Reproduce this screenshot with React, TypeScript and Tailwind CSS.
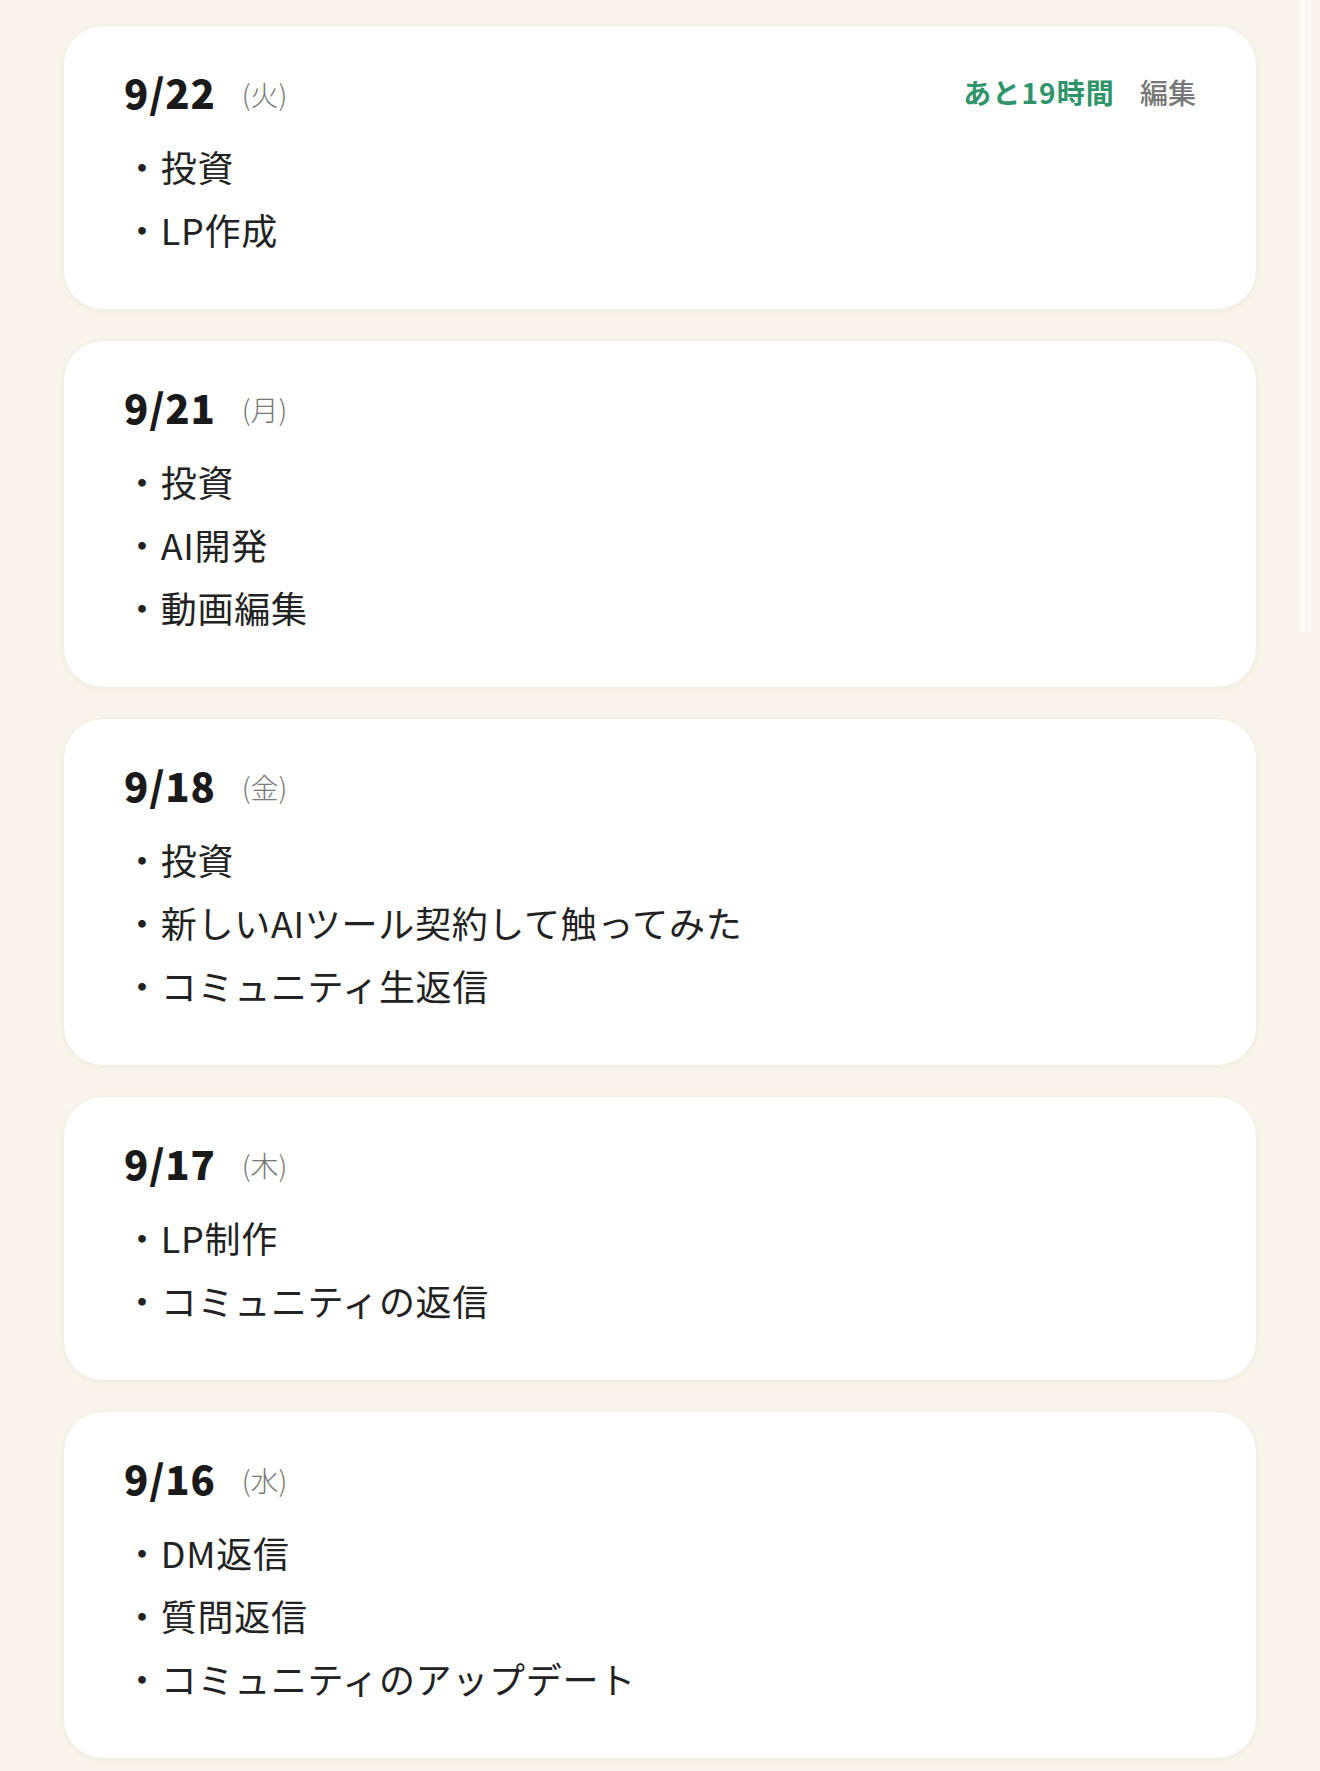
import React from "react"

type Entry = {
  date: string
  day: string
  items: string[]
  remaining?: string
}

const entries: Entry[] = [
  { date: "9/22", day: "火", items: ["投資", "LP作成"], remaining: "あと19時間" },
  { date: "9/21", day: "月", items: ["投資", "AI開発", "動画編集"] },
  { date: "9/18", day: "金", items: ["投資", "新しいAIツール契約して触ってみた", "コミュニティ生返信"] },
  { date: "9/17", day: "木", items: ["LP制作", "コミュニティの返信"] },
  { date: "9/16", day: "水", items: ["DM返信", "質問返信", "コミュニティのアップデート"] }
]

const font = { fontFamily: '"Noto Sans CJK JP", "Noto Sans", sans-serif' }

function EntryCard({ entry }: { entry: Entry }) {
  return (
    <section className="rounded-[40px] border border-[#f2eee5] bg-white px-[60px] pb-[48px] pt-[42px] shadow-[0_2px_6px_rgba(120,100,60,0.06)]">
      <header className="flex h-[48px] items-center justify-between">
        <div className="flex items-center">
          <h2 className="text-[40px] font-black leading-[48px] tracking-[0.02em] text-[#1a1a1a]">
            {entry.date}
          </h2>
          <span className="ml-[26px] mt-[3px] text-[28px] font-light text-[#777777]">({entry.day})</span>
        </div>
        {entry.remaining && (
          <div className="flex items-center gap-[25px] text-[28px] leading-[48px]">
            <span className="font-bold tracking-[0.04em] text-[#2f946a]">{entry.remaining}</span>
            <button className="font-medium text-[#777777]">編集</button>
          </div>
        )}
      </header>
      <ul className="mt-[19px]">
        {entry.items.map((item) => (
          <li key={item} className="text-[36px] leading-[63px] tracking-[0.02em] text-[#222222]">
            ・{item}
          </li>
        ))}
      </ul>
    </section>
  )
}

export default function App() {
  return (
    <div className="relative min-h-[1771px] bg-[#f9f5ec]" style={font}>
      <main className="flex flex-col gap-[30px] px-[63px] pt-[25px] pb-[12px]">
        {entries.map((entry) => (
          <EntryCard key={entry.date} entry={entry} />
        ))}
      </main>
      <div className="absolute right-[9px] top-0 h-[632px] w-[11px] bg-[#fcfaf6]" />
    </div>
  )
}
